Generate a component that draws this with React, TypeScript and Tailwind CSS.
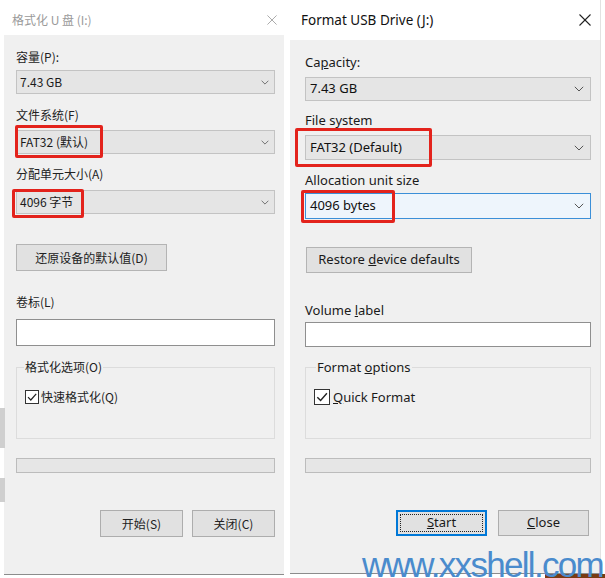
import React from "react";

function Chevron({ w = 8 }: { w?: number }) {
  return (
    <svg width={w} height={w / 2 + 1} viewBox="0 0 10 6" className="shrink-0">
      <polyline points="0.8,0.8 5,5 9.2,0.8" fill="none" stroke="#555" strokeWidth="1" />
    </svg>
  );
}

function XIcon({ size, color, sw }: { size: number; color: string; sw: number }) {
  return (
    <svg width={size} height={size} viewBox="0 0 12 12">
      <line x1="0.5" y1="0.5" x2="11.5" y2="11.5" stroke={color} strokeWidth={sw} />
      <line x1="11.5" y1="0.5" x2="0.5" y2="11.5" stroke={color} strokeWidth={sw} />
    </svg>
  );
}

function Check({ size }: { size: number }) {
  return (
    <div
      className="flex items-center justify-center bg-white border border-[#333] shrink-0"
      style={{ width: size, height: size }}
    >
      <svg width={size - 2} height={size - 2} viewBox="0 0 12 12">
        <polyline points="2,6.2 4.8,9 10.2,2.8" fill="none" stroke="#222" strokeWidth="1.2" />
      </svg>
    </div>
  );
}

function LeftDialog() {
  const combo =
    "flex items-center justify-between h-[24px] bg-[#e5e5e5] border border-[#c3c3c3] pl-[3px] pr-[5px] text-[#1a1a1a]";
  return (
    <div className="w-[280px] h-[570px] mt-[5px] ml-[4px] flex flex-col bg-[#f0f0f0] border-b border-[#8c8c8c] font-['Noto_Sans_CJK_SC',sans-serif] text-[12px] text-[#222]">
      <div className="h-[30px] bg-white flex items-center justify-between pl-[8px] pr-[7px] shrink-0">
        <span className="text-[#9a9a9a] text-[12px]">格式化 U 盘 (I:)</span>
        <XIcon size={10} color="#9a9a9a" sw={1} />
      </div>
      <div className="flex flex-col pl-[12px] pr-[9px]">
        <div className="mt-[14px] h-[16px] leading-[16px]">容量(P):</div>
        <div className={`mt-[5px] ${combo}`}>
          <span>7.43 GB</span>
          <Chevron w={8} />
        </div>
        <div className="mt-[13px] h-[16px] leading-[16px]">文件系统(F)</div>
        <div className={`mt-[7px] ${combo}`}>
          <span>FAT32 (默认)</span>
          <Chevron w={8} />
        </div>
        <div className="mt-[12px] h-[16px] leading-[16px]">分配单元大小(A)</div>
        <div className={`mt-[8px] ${combo}`}>
          <span>4096 字节</span>
          <Chevron w={8} />
        </div>
        <div className="mt-[30px] w-[151px] h-[27px] flex items-center justify-center bg-[#e1e1e1] border border-[#b4b4b4]">
          还原设备的默认值(D)
        </div>
        <div className="mt-[23px] h-[16px] leading-[16px]">卷标(L)</div>
        <div className="mt-[9px] h-[27px] bg-white border border-[#8f8f8f]" />
        <div className="relative mt-[21px] h-[72px] border border-[#dcdcdc]">
          <span className="absolute left-[7px] top-[-9px] px-[1px] bg-[#f0f0f0] leading-[16px]">格式化选项(O)</span>
          <div className="flex items-center gap-[2px] ml-[8px] mt-[21px]">
            <Check size={14} />
            <span className="leading-[16px]">快速格式化(Q)</span>
          </div>
        </div>
        <div className="mt-[19px] h-[15px] bg-[#e6e6e6] border border-[#bcbcbc]" />
        <div className="mt-[37px] flex justify-end gap-[9px]">
          <div className="w-[83px] h-[27px] flex items-center justify-center bg-[#e1e1e1] border border-[#adadad]">
            开始(S)
          </div>
          <div className="w-[83px] h-[27px] flex items-center justify-center bg-[#e1e1e1] border border-[#adadad]">
            关闭(C)
          </div>
        </div>
      </div>
    </div>
  );
}

function RightDialog() {
  const combo =
    "flex items-center justify-between bg-[#e5e5e5] border border-[#c3c3c3] pl-[4px] pr-[6px] text-[#111]";
  return (
    <div className="w-[311px] h-[574px] ml-[6px] flex flex-col bg-[#f0f0f0] border-b border-[#8c8c8c] border-r border-r-[#e2e2e2] font-['Noto_Sans',sans-serif] text-[13px] text-[#1a1a1a]">
      <div className="h-[40px] bg-white flex items-center justify-between pl-[11px] pr-[9px] shrink-0">
        <span className="text-[#111] text-[13.5px]">Format USB Drive (J:)</span>
        <XIcon size={12} color="#222" sw={1.1} />
      </div>
      <div className="flex flex-col pl-[15px] pr-[9px]">
        <div className="mt-[13px] h-[18px] leading-[18px]">
          Ca<span className="underline">p</span>acity:
        </div>
        <div className={`mt-[6px] h-[24px] ${combo}`}>
          <span>7.43 GB</span>
          <Chevron w={10} />
        </div>
        <div className="mt-[10px] h-[18px] leading-[18px]">File system</div>
        <div className={`mt-[6px] h-[25px] ${combo}`}>
          <span>FAT32 (Default)</span>
          <Chevron w={10} />
        </div>
        <div className="mt-[11px] h-[18px] leading-[18px]">Allocation unit size</div>
        <div className="mt-[4px] h-[26px] flex items-center justify-between bg-[#eef5fc] border border-[#3b8fd8] pl-[4px] pr-[6px] text-[#111]">
          <span>4096 bytes</span>
          <Chevron w={10} />
        </div>
        <div className="mt-[28px] ml-[1px] w-[166px] h-[26px] flex items-center justify-center bg-[#e1e1e1] border border-[#b4b4b4]">
          <span>
            Restore <span className="underline">d</span>evice defaults
          </span>
        </div>
        <div className="mt-[28px] h-[18px] leading-[18px]">
          Volume <span className="underline">l</span>abel
        </div>
        <div className="mt-[3px] h-[25px] bg-white border border-[#8f8f8f]" />
        <div className="relative mt-[20px] h-[72px] border border-[#dcdcdc]">
          <span className="absolute left-[10px] top-[-10px] px-[1px] bg-[#f0f0f0] leading-[18px]">
            Format <span className="underline">o</span>ptions
          </span>
          <div className="flex items-center gap-[3px] ml-[8px] mt-[20px]">
            <Check size={16} />
            <span className="leading-[18px]">
              <span className="underline">Q</span>uick Format
            </span>
          </div>
        </div>
        <div className="mt-[19px] h-[15px] bg-[#e6e6e6] border border-[#bcbcbc]" />
        <div className="mt-[37px] mr-[2px] flex justify-end gap-[11px]">
          <div className="w-[91px] h-[26px] flex items-center justify-center bg-[#e1e1e1] border-2 border-[#0078d7] outline-1 outline-dotted outline-[#222] outline-offset-[-5px]">
            <span>
              <span className="underline">S</span>tart
            </span>
          </div>
          <div className="w-[91px] h-[26px] flex items-center justify-center bg-[#e1e1e1] border border-[#adadad]">
            <span>
              <span className="underline">C</span>lose
            </span>
          </div>
        </div>
      </div>
    </div>
  );
}

export default function App() {
  return (
    <div className="relative w-[605px] h-[578px] overflow-hidden bg-white">
      {/* background bits */}
      <div className="absolute left-0 top-[408px] w-[5px] h-[40px] bg-[#cfcfcf]" />
      <div className="absolute left-0 top-[478px] w-[5px] h-[24px] bg-[#cfcfcf]" />
      <div className="absolute left-[545px] top-[574px] w-[60px] h-[4px] bg-[#7a3a12]" />

      <div className="flex items-start">
        <LeftDialog />
        <RightDialog />
      </div>

      {/* red annotation boxes */}
      <div className="absolute left-[15px] top-[125px] w-[88px] h-[33px] border-[3px] border-[#e3231c] rounded-[2px]" />
      <div className="absolute left-[12px] top-[189px] w-[72px] h-[29px] border-[3px] border-[#e3231c] rounded-[2px]" />
      <div className="absolute left-[295px] top-[128px] w-[137px] h-[39px] border-[3px] border-[#e3231c] rounded-[2px]" />
      <div className="absolute left-[301px] top-[190px] w-[94px] h-[33px] border-[3px] border-[#e3231c] rounded-[2px]" />

      {/* watermark */}
      <div className="absolute left-[362px] top-[547px] text-[35px] leading-[35px] tracking-[-1.7px] text-[#4a8bcd] font-['Liberation_Sans',Arial,sans-serif] whitespace-nowrap">
        www.xxshell.com
      </div>
    </div>
  );
}
